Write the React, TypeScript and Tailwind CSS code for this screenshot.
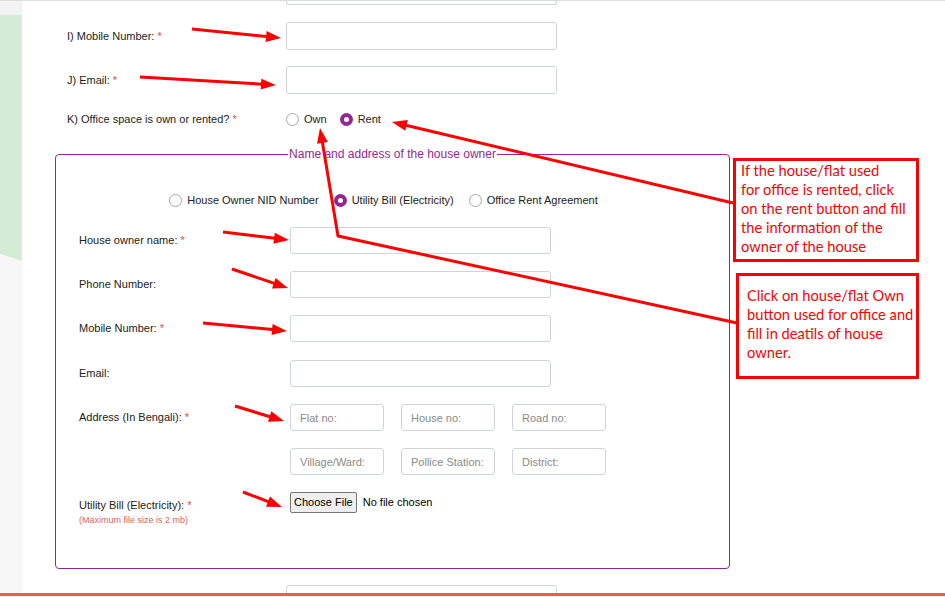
import React from "react";

const Req = () => <span className="text-[#e8474c]">*</span>;

function Radio({ checked }: { checked?: boolean }) {
  return checked ? (
    <span className="flex h-[13px] w-[13px] shrink-0 items-center justify-center rounded-full bg-[#93278f]">
      <span className="h-[5px] w-[5px] rounded-full bg-white" />
    </span>
  ) : (
    <span className="h-[13px] w-[13px] shrink-0 rounded-full border border-[#a8a8a8] bg-white" />
  );
}

function RadioOpt({ label, checked }: { label: string; checked?: boolean }) {
  return (
    <span className="flex items-center gap-[5px]">
      <Radio checked={checked} />
      <span className="whitespace-nowrap">{label}</span>
    </span>
  );
}

function OuterRow({ mt, children }: { mt: string; children: React.ReactNode }) {
  return (
    <div className={`flex items-center ${mt}`}>
      <div className="w-[219px]">{children}</div>
      <input className="h-[28px] w-[271px] rounded-[3px] border border-[#cfd4da] bg-white" />
    </div>
  );
}

function InnerRow({ mt, children }: { mt: string; children: React.ReactNode }) {
  return (
    <div className={`flex items-center ${mt}`}>
      <div className="w-[211px]">{children}</div>
      <input className="h-[27px] w-[261px] rounded-[3px] border border-[#cfd4da] bg-white" />
    </div>
  );
}

function Small({ ph }: { ph: string }) {
  return (
    <input
      placeholder={ph}
      className="h-[27px] w-[94px] rounded-[3px] border border-[#cfd4da] bg-white pl-[9px] text-[11px] text-[#333] placeholder:text-[#8a8a8a]"
    />
  );
}

type Pt = [number, number];

function Arrow({ pts, len = 15, hw = 5.5 }: { pts: Pt[]; len?: number; hw?: number }) {
  const [x1, y1] = pts[pts.length - 2];
  const [x2, y2] = pts[pts.length - 1];
  const dx = x2 - x1;
  const dy = y2 - y1;
  const d = Math.hypot(dx, dy);
  const ux = dx / d;
  const uy = dy / d;
  const bx = x2 - ux * len;
  const by = y2 - uy * len;
  const px = -uy;
  const py = ux;
  const linePts = [...pts.slice(0, -1), [bx + ux * 3, by + uy * 3] as Pt];
  return (
    <g>
      <polyline
        points={linePts.map((p) => p.join(",")).join(" ")}
        fill="none"
        stroke="#ff0000"
        strokeWidth={3}
        strokeLinejoin="round"
      />
      <polygon
        points={`${x2},${y2} ${bx + px * hw},${by + py * hw} ${bx - px * hw},${by - py * hw}`}
        fill="#ff0000"
      />
    </g>
  );
}

export default function App() {
  return (
    <div className="relative flex h-[597px] w-[945px] flex-col overflow-hidden bg-white font-['Liberation_Sans',Arial,sans-serif] text-[11px] leading-[13px] text-[#222]">
      <div className="h-[1px] shrink-0 bg-[#dcdcdc]" />
      <div className="flex flex-1">
        {/* left decorative strip */}
        <div className="flex w-[22px] shrink-0 flex-col bg-[#f7f7f7]">
          <div className="h-[14px] bg-[#f2f3f2]" />
          <div className="h-[246px] bg-[#d4ebd6] [clip-path:polygon(0_0,100%_0,100%_100%,0_97%)]" />
        </div>

        <div className="flex flex-1 flex-col pl-[33px]">
          <div className="ml-[231px] h-[4px] w-[271px] rounded-b-[3px] border border-t-0 border-[#cfd4da]" />

          <div className="pl-[12px]">
            <OuterRow mt="mt-[17px]">
              I) Mobile Number: <Req />
            </OuterRow>
            <OuterRow mt="mt-[16px]">
              J) Email: <Req />
            </OuterRow>
            <div className="mt-[18px] flex h-[14px] items-center">
              <div className="w-[219px]">
                K) Office space is own or rented? <Req />
              </div>
              <div className="flex items-center gap-[13px]">
                <RadioOpt label="Own" />
                <RadioOpt label="Rent" checked />
              </div>
            </div>
          </div>

          <fieldset className="mt-[21px] w-[675px] rounded-[4px] border border-[#93278f] pb-[42px]">
            <legend className="mx-auto px-[1px] text-[12px] leading-[14px] text-[#93278f]">
              Name and address of the house owner
            </legend>
            <div className="mt-[32px] flex h-[14px] items-center justify-center gap-[15px] pr-[18px]">
              <RadioOpt label="House Owner NID Number" />
              <RadioOpt label="Utility Bill (Electricity)" checked />
              <RadioOpt label="Office Rent Agreement" />
            </div>

            <div className="pl-[23px]">
              <InnerRow mt="mt-[20px]">
                House owner name: <Req />
              </InnerRow>
              <InnerRow mt="mt-[17px]">Phone Number:</InnerRow>
              <InnerRow mt="mt-[17px]">
                Mobile Number: <Req />
              </InnerRow>
              <InnerRow mt="mt-[18px]">Email:</InnerRow>

              <div className="mt-[17px] flex items-start">
                <div className="flex h-[27px] w-[211px] items-center">
                  <span>
                    Address (In Bengali): <Req />
                  </span>
                </div>
                <div className="grid w-fit grid-cols-3 gap-x-[17px] gap-y-[17px]">
                  <Small ph="Flat no:" />
                  <Small ph="House no:" />
                  <Small ph="Road no:" />
                  <Small ph="Village/Ward:" />
                  <Small ph="Pollice Station:" />
                  <Small ph="District:" />
                </div>
              </div>

              <div className="mt-[17px] flex items-start">
                <div className="w-[211px] pt-[7px]">
                  <div>
                    Utility Bill (Electricity): <Req />
                  </div>
                  <div className="mt-[3px] text-[9px] leading-[11px] text-[#e25e5e]">
                    (Maximum file size is 2 mb)
                  </div>
                </div>
                <div className="flex items-center">
                  <span className="flex h-[21px] items-center rounded-[2px] border border-[#767676] bg-[#efefef] px-[3px] text-[11px] text-black">
                    Choose File
                  </span>
                  <span className="ml-[6px] text-[11px] text-black">No file chosen</span>
                </div>
              </div>
            </div>
          </fieldset>

          <div className="ml-[231px] mt-[16px] h-[20px] w-[271px] shrink-0 rounded-t-[3px] border border-[#cfd4da]" />
        </div>
      </div>

      {/* footer bar */}
      <div className="absolute bottom-0 left-0 right-0">
        <div className="h-[3px] bg-[#f25858]" />
        <div className="h-[1px] bg-[#f1f1f1]" />
      </div>

      {/* annotation boxes */}
      <div className="absolute left-[733px] top-[158px] h-[104px] w-[186px] whitespace-nowrap border-[3px] border-[#ff0000] bg-white pl-[5px] font-['Lato',sans-serif] text-[14.7px] leading-[19px] text-[#ff0000]">
        If the house/flat used
        <br />
        for office is rented, click
        <br />
        on the rent button and fill
        <br />
        the information of the
        <br />
        owner of the house
      </div>
      <div className="absolute left-[736px] top-[273px] h-[106px] w-[183px] whitespace-nowrap border-[3px] border-[#ff0000] bg-white pl-[8px] pt-[10px] font-['Lato',sans-serif] text-[14.7px] leading-[19px] text-[#ff0000]">
        Click on house/flat Own
        <br />
        button used for office and
        <br />
        fill in deatils of house
        <br />
        owner.
      </div>

      {/* arrows */}
      <svg className="pointer-events-none absolute left-0 top-0" width={945} height={597} viewBox="0 0 945 597">
        <Arrow pts={[[192, 29], [281, 38]]} />
        <Arrow pts={[[140, 77], [276, 85]]} />
        <Arrow pts={[[733, 203], [392, 122]]} />
        <Arrow pts={[[737, 323], [338, 236], [320, 128]]} />
        <Arrow pts={[[223, 232], [289, 240]]} />
        <Arrow pts={[[232, 269], [288, 288]]} />
        <Arrow pts={[[203, 323], [287, 331]]} />
        <Arrow pts={[[235, 406], [284, 421]]} />
        <Arrow pts={[[243, 492], [282, 507]]} />
      </svg>
    </div>
  );
}
